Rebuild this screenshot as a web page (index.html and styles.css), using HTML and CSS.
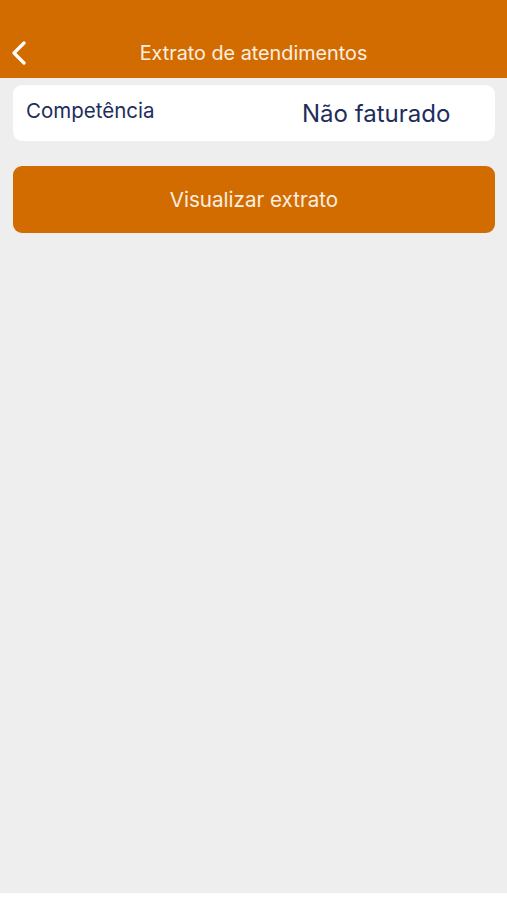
FILE: index.html
```html
<!DOCTYPE html>
<html>
  <head>
    <meta charset="utf-8">
    <title>Extrato de atendimentos</title>
    <link rel="stylesheet" href="styles.css">
  </head>
  <body>
    <div class="screen">
      <div class="navbar">
        <button class="back">
          <svg width="16" height="24" viewBox="0 0 16 24">
            <path d="M13 2 L3 12 L13 22" fill="none" stroke="#fff" stroke-width="3.2" stroke-linecap="round" stroke-linejoin="round"/>
          </svg>
        </button>
        <div class="title">Extrato de atendimentos</div>
      </div>
      <div class="content">
        <div class="card">
          <span class="label">Competência</span>
          <span class="value">Não faturado</span>
        </div>
        <button class="primary">Visualizar extrato</button>
      </div>
    </div>
    <div class="bottom"></div>
  </body>
</html>
```

FILE: styles.css
```css
:root {
  --orange: #d36c00;
  --bg-color: #eeeeee;
  --navy: #1e2d5c;
  --light-text: #fbefe0;
}

*, *:before, *:after {
  box-sizing: border-box;
}

html, body {
  margin: 0;
  padding: 0;
  height: 100%;
}

body {
  font-family: Inter, "Noto Sans", sans-serif;
  background: #fff;
  display: flex;
  flex-direction: column;
}

.screen {
  height: 893px;
  background: var(--bg-color);
  display: flex;
  flex-direction: column;
}

/*----- NAVBAR -----*/

.navbar {
  height: 78px;
  background: var(--orange);
  display: flex;
  align-items: flex-end;
  padding: 0 0 12px 11px;
}

.navbar .back {
  background: none;
  border: none;
  padding: 0;
  width: 20px;
  height: 26px;
  display: flex;
  align-items: center;
}

.navbar .title {
  flex: 1;
  text-align: center;
  color: var(--light-text);
  font-size: 19.8px;
  line-height: 26px;
  margin-right: 31px;
}

/*----- CONTENT -----*/

.content {
  padding: 7px 12px 0 13px;
  display: flex;
  flex-direction: column;
}

.card {
  height: 56px;
  background: #fff;
  border-radius: 9px;
  display: flex;
  align-items: center;
  padding: 0 13px;
  color: var(--navy);
}

.card .label {
  font-size: 20.5px;
  width: 276px;
  margin-top: -5px;
}

.card .value {
  font-size: 24px;
  margin-top: 1px;
}

.primary {
  margin-top: 25px;
  height: 67px;
  background: var(--orange);
  border: none;
  border-radius: 9px;
  color: var(--light-text);
  font-family: inherit;
  font-size: 20.6px;
}
```
